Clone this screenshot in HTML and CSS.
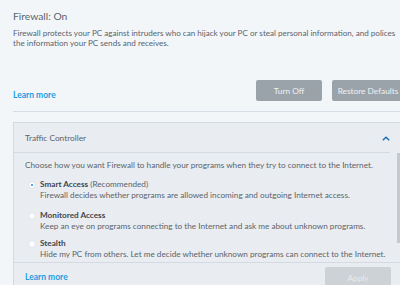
FILE: index.html
```html
<!DOCTYPE html>
<html>
<head>
<meta charset="utf-8">
<link rel="stylesheet" href="styles.css">
</head>
<body>
<div class="page">
  <div class="intro">
    <h1 class="title">Firewall: On</h1>
    <p class="desc">Firewall protects your PC against intruders who can hijack your PC or steal personal information, and polices<br>the information your PC sends and receives.</p>
  </div>
  <div class="actions">
    <a class="link">Learn more</a>
    <div class="buttons">
      <button class="btn btn-turnoff">Turn Off</button>
      <button class="btn btn-restore">Restore Defaults</button>
    </div>
  </div>
  <div class="divider"></div>
  <div class="panel">
    <div class="panel-head">
      <span class="panel-title">Traffic Controller</span>
      <svg class="chev" width="8" height="5" viewBox="0 0 8 5"><path d="M0.8 4.3 L4 1.2 L7.2 4.3" fill="none" stroke="#1f6fb5" stroke-width="1.5"/></svg>
    </div>
    <div class="panel-body">
      <p class="lead">Choose how you want Firewall to handle your programs when they try to connect to the Internet.</p>
      <div class="option">
        <span class="radio checked"></span>
        <div class="opt-text">
          <div class="opt-name"><b>Smart Access</b> (Recommended)</div>
          <div class="opt-desc">Firewall decides whether programs are allowed incoming and outgoing Internet access.</div>
        </div>
      </div>
      <div class="option opt-2">
        <span class="radio"></span>
        <div class="opt-text">
          <div class="opt-name"><b>Monitored Access</b></div>
          <div class="opt-desc">Keep an eye on programs connecting to the Internet and ask me about unknown programs.</div>
        </div>
      </div>
      <div class="option opt-3">
        <span class="radio"></span>
        <div class="opt-text">
          <div class="opt-name"><b>Stealth</b></div>
          <div class="opt-desc">Hide my PC from others. Let me decide whether unknown programs can connect to the Internet.</div>
        </div>
      </div>
      <div class="scrollbar"></div>
    </div>
    <div class="panel-foot">
      <a class="link">Learn more</a>
      <button class="btn btn-apply">Apply</button>
    </div>
  </div>
</div>
</body>
</html>
```

FILE: styles.css
```css
html, body {
  margin: 0;
  padding: 0;
  background: #f3f6f9;
  overflow: hidden;
  width: 400px;
  height: 285px;
}
.page {
  font-family: Lato, "Open Sans", sans-serif;
  color: #5a636c;
  width: 404px;
}
.intro {
  padding: 9px 0 0 13px;
}
.title {
  margin: 0;
  font-size: 10.3px;
  font-weight: normal;
  line-height: 14px;
  color: #5b636b;
}
.desc {
  margin: 5px 0 0 0;
  font-size: 8.1px;
  line-height: 10px;
  color: #5a636c;
  white-space: nowrap;
}
.actions {
  display: flex;
  justify-content: space-between;
  align-items: flex-end;
  padding-left: 13px;
  margin-top: 32px;
  height: 21px;
}
.link {
  color: #1c9ce3;
  font-size: 8.5px;
  font-weight: bold;
  line-height: 10px;
  margin-bottom: 1px;
}
.buttons {
  display: flex;
  gap: 10px;
  margin-top: -1px;
}
.btn {
  font-family: Lato, "Open Sans", sans-serif;
  border: none;
  border-radius: 2px;
  background: #9ba3aa;
  color: #eef1f3;
  font-size: 8.3px;
  height: 21px;
  padding: 0;
}
.btn-turnoff { width: 66px; }
.btn-restore { width: 72px; }
.divider {
  height: 1px;
  background: #d6dde4;
  margin: 10px 0 0 13px;
}
.panel {
  margin: 10px 0 0 13px;
  background: #e9edf1;
  border: 1px solid #d3dae1;
  border-right: none;
}
.panel-head {
  height: 29px;
  display: flex;
  align-items: center;
  justify-content: space-between;
  padding-left: 11px;
  border-bottom: 1px solid #d3dae1;
  width: 365px;
}
.panel-title {
  font-size: 8.3px;
  color: #5b636b;
}
.chev { margin-top: 1px; }
.panel-body {
  position: relative;
  padding: 7px 0 0 11px;
  height: 102px;
  border-bottom: 1px solid #d3dae1;
}
.lead {
  margin: 0;
  font-size: 8.2px;
  line-height: 10px;
  color: #5b636b;
}
.option {
  display: flex;
  margin-top: 9px;
}
.opt-2 { margin-top: 9px; }
.opt-3 { margin-top: 6px; }
.radio {
  width: 8px;
  height: 8px;
  border-radius: 50%;
  background: #fbfcfd;
  border: 1px solid #e0e4e8;
  box-sizing: border-box;
  margin: 1.5px 0 0 3px;
  flex: none;
  position: relative;
}
.radio.checked::after {
  content: "";
  position: absolute;
  left: 2px;
  top: 2px;
  width: 2px;
  height: 2px;
  border-radius: 50%;
  background: #1c8be0;
}
.opt-text {
  margin-left: 4px;
  font-size: 8.2px;
  line-height: 11px;
}
.opt-name {
  color: #5b636b;
}
.opt-name b {
  color: #3f464d;
  font-weight: bold;
}
.opt-desc {
  color: #5b636b;
  white-space: nowrap;
}
.scrollbar {
  position: absolute;
  left: 383px;
  top: 0;
  width: 3px;
  height: 90px;
  background: #c3c9cf;
}
.panel-foot {
  display: flex;
  justify-content: space-between;
  align-items: center;
  padding: 4px 0 0 11px;
  width: 366px;
}
.btn-apply {
  width: 66px;
  background: #cdd2d6;
  color: #e8ecef;
}
```
